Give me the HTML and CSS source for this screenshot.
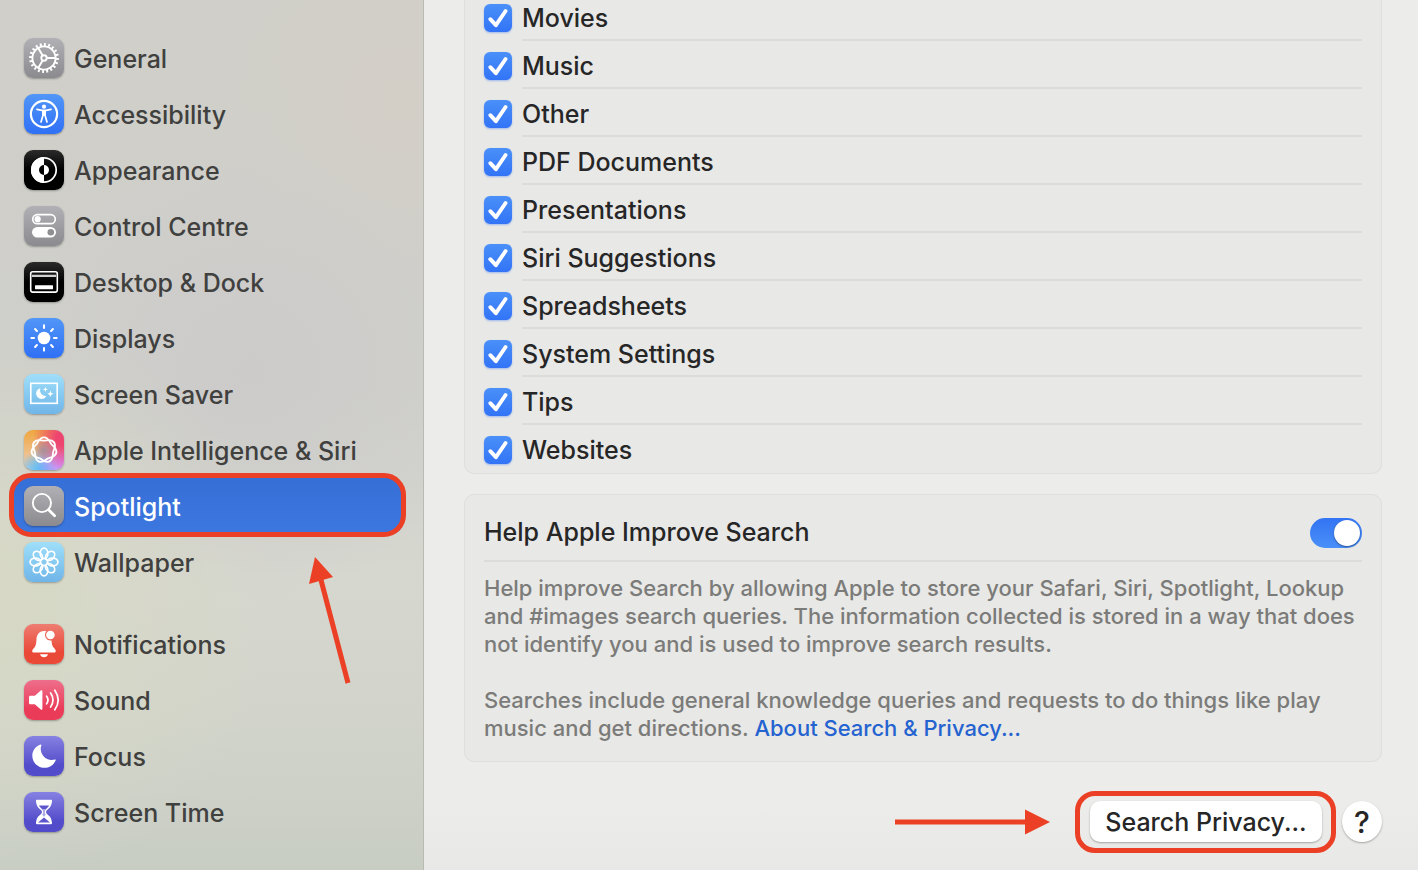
FILE: index.html
```
<!DOCTYPE html>
<html lang="en">

<head>
  <title>System Settings</title>
  <meta charset="utf-8">
  <meta name="viewport" content="width=device-width, initial-scale=1">
  <link rel="stylesheet" href="styles.css">
</head>

<body>

  <!-- Sidebar -->
  <nav class="sidebar">
    <ul class="menu">
      <li><a class="menu-item" href="#">
        <svg class="icon gray" viewBox="0 0 40 40">
          <g fill="none" stroke="#fff" stroke-width="1.9">
            <circle cx="20" cy="20" r="11.6"/>
            <circle cx="20" cy="20" r="13.5" stroke-width="2.8" pathLength="40" stroke-dasharray="0.9 1.1"/>
            <circle cx="20" cy="20" r="2.7"/>
            <path d="M22.8 20H31.5M18.6 17.6L14.2 10M18.6 22.4L14.2 30"/>
          </g>
        </svg>
        <span>General</span></a></li>
      <li><a class="menu-item" href="#">
        <svg class="icon blue" viewBox="0 0 40 40">
          <circle cx="20" cy="20" r="13.1" fill="none" stroke="#fff" stroke-width="2.2"/>
          <circle cx="20" cy="12.7" r="2.1" fill="#fff"/>
          <path d="M13 15.4L18 16.4H22L27 15.4M18.9 16.5V21.500L17 28M21.1 16.5V21.500L23 28" fill="none" stroke="#fff" stroke-width="1.7" stroke-linecap="round" stroke-linejoin="round"/>
          <path d="M18.2 16h3.6v6h-3.6z" fill="#fff"/>
        </svg>
        <span>Accessibility</span></a></li>
      <li><a class="menu-item" href="#">
        <svg class="icon black" viewBox="0 0 40 40">
          <circle cx="20" cy="20" r="12.2" fill="none" stroke="#fff" stroke-width="1.7"/>
          <path d="M20 7a13 13 0 0 0 0 26v-8a5 5 0 0 1 0-10z" fill="#fff"/>
          <path d="M20 15a5 5 0 0 1 0 10z" fill="#fff"/>
        </svg>
        <span>Appearance</span></a></li>
      <li><a class="menu-item" href="#">
        <svg class="icon gray" viewBox="0 0 40 40">
          <rect x="8.7" y="8.7" width="22.6" height="9" rx="4.5" fill="none" stroke="#fff" stroke-width="1.7"/>
          <circle cx="13.6" cy="13.2" r="3.1" fill="#fff"/>
          <rect x="8" y="21" width="24" height="10.6" rx="5.3" fill="#fff"/>
          <circle cx="26.8" cy="26.2" r="3.3" fill="#8f8e93"/>
        </svg>
        <span>Control Centre</span></a></li>
      <li><a class="menu-item" href="#">
        <svg class="icon black" viewBox="0 0 40 40">
          <rect x="6.7" y="9.7" width="26.6" height="20.4" rx="2" fill="none" stroke="#fff" stroke-width="1.6"/>
          <path d="M8 12.8h24v2.2h-24z" fill="#d0d0d0"/>
          <rect x="11" y="23.2" width="18" height="4" rx="0.6" fill="#fff"/>
        </svg>
        <span>Desktop &amp; Dock</span></a></li>
      <li><a class="menu-item" href="#">
        <svg class="icon blue" viewBox="0 0 40 40">
          <circle cx="20" cy="20" r="6.3" fill="#fff"/>
          <path d="M20 7.4v2.6M20 30v2.6M7.4 20H10M30 20h2.6M11.1 11.1l1.8 1.8M27.1 27.1l1.8 1.8M11.1 28.9l1.8-1.8M27.1 12.9l1.8-1.8" stroke="#fff" stroke-width="2.1" stroke-linecap="round"/>
        </svg>
        <span>Displays</span></a></li>
      <li><a class="menu-item" href="#">
        <svg class="icon sky" viewBox="0 0 40 40">
          <rect x="6.8" y="9.3" width="26.4" height="20" fill="none" stroke="#fff" stroke-width="1.6"/>
          <path d="M16.4 14.2A5.4 5.4 0 1 0 22.4 21.8A5.5 5.5 0 0 1 16.400 14.200z" fill="#fff"/>
          <path d="M21.4 12.8l.7 1.9 1.9.7-1.900.7-.7 1.900-.7-1.900-1.900-.7 1.900-.7zM26.400 16.600l.9 2.300 2.300.9-2.300.9-.9 2.300-.9-2.300-2.300-.9 2.300-.9z" fill="#fff"/>
        </svg>
        <span>Screen Saver</span></a></li>
      <li><a class="menu-item" href="#">
        <svg class="icon rainbow" viewBox="0 0 40 40">
          <defs>
            <path id="lobe" d="M-7.35-5.86C-5.48-8.21-4.6-12.6 0-12.6S5.48-8.21 7.35-5.86"/>
          </defs>
          <g transform="translate(20 20)" fill="none" stroke="#fff" stroke-width="1.9">
            <use href="#lobe"/>
            <use href="#lobe" transform="rotate(51.43)"/>
            <use href="#lobe" transform="rotate(102.86)"/>
            <use href="#lobe" transform="rotate(154.29)"/>
            <use href="#lobe" transform="rotate(205.71)"/>
            <use href="#lobe" transform="rotate(257.14)"/>
            <use href="#lobe" transform="rotate(308.57)"/>
          </g>
        </svg>
        <span>Apple Intelligence &amp; Siri</span></a></li>
      <li><a class="menu-item selected" href="#" aria-current="page">
        <svg class="icon gray" viewBox="0 0 40 40">
          <circle cx="17.9" cy="17" r="9.1" fill="none" stroke="#fff" stroke-width="1.9"/>
          <path d="M24.6 23.7l6 6" stroke="#fff" stroke-width="2.8" stroke-linecap="round"/>
        </svg>
        <span>Spotlight</span></a></li>
      <li><a class="menu-item" href="#">
        <svg class="icon sky" viewBox="0 0 40 40">
          <defs>
            <ellipse id="petal" cx="0" cy="-8.600" rx="3.800" ry="5.300"/>
          </defs>
          <g transform="translate(20 20)" fill="none" stroke="#fff" stroke-width="1.700">
            <use href="#petal"/>
            <use href="#petal" transform="rotate(45)"/>
            <use href="#petal" transform="rotate(90)"/>
            <use href="#petal" transform="rotate(135)"/>
            <use href="#petal" transform="rotate(180)"/>
            <use href="#petal" transform="rotate(225)"/>
            <use href="#petal" transform="rotate(270)"/>
            <use href="#petal" transform="rotate(315)"/>
            <circle r="3.600" stroke-width="1.200"/>
          </g>
        </svg>
        <span>Wallpaper</span></a></li>
    </ul>

    <ul class="menu">
      <li><a class="menu-item" href="#">
        <svg class="icon red" viewBox="0 0 40 40">
          <path d="M20 7C15 7 12.8 11 12.5 15C12.2 20 12 22 9.5 24.6C8 26.2 7.6 28.6 9.6 28.6H30.4C32.4 28.6 32 26.2 30.5 24.6C28 22 27.8 20 27.5 16.5A5.6 5.6 0 0 1 22.4 7.3C21.6 7.1 20.8 7 20 7z" fill="#fff"/>
          <circle cx="26.4" cy="11" r="4.3" fill="#fff"/>
          <path d="M16 30.3h8c-.6 2-2 3-4 3s-3.4-1-4-3z" fill="#fff"/>
        </svg>
        <span>Notifications</span></a></li>
      <li><a class="menu-item" href="#">
        <svg class="icon pink" viewBox="0 0 40 40">
          <path d="M6.5 15.8H10.8L16.8 10.5C17.6 9.8 18.4 10.2 18.4 11V29C18.4 29.8 17.6 30.2 16.8 29.5L10.8 24.2H6.5C5.5 24.2 5 23.7 5 22.7V17.3C5 16.3 5.5 15.8 6.5 15.8z" fill="#fff"/>
          <path d="M22.6 16.2Q25.4 20 22.6 23.8M26.6 13Q31.4 20 26.6 27M30.8 10.2Q37.6 20 30.8 29.8" fill="none" stroke="#fff" stroke-width="1.7" stroke-linecap="round"/>
        </svg>
        <span>Sound</span></a></li>
      <li><a class="menu-item" href="#">
        <svg class="icon purple" viewBox="0 0 40 40">
          <path d="M16.6 8.5C17.2 8.3 17.6 8.7 17.3 9.4C14.6 17 21.5 26 30.8 23.6C31.6 23.4 32 23.8 31.6 24.5C29.8 28.9 25.5 31.8 20.6 31.8C13.8 31.8 8.3 26.5 8.3 19.7C8.3 14.5 11.8 10 16.6 8.5z" fill="#fff"/>
        </svg>
        <span>Focus</span></a></li>
      <li><a class="menu-item" href="#">
        <svg class="icon purple" viewBox="0 0 40 40">
          <path d="M13 7.8H27C27.8 7.8 28.2 8.4 28 9.2C27.5 14 26 15.5 23 18C21.7 19.2 21.7 20.8 23 22C26 24.5 27.5 26 28 30.8C28.2 31.6 27.8 32.2 27 32.2H13C12.2 32.2 11.8 31.6 12 30.8C12.5 26 14 24.5 17 22C18.3 20.8 18.3 19.2 17 18C14 15.5 12.5 14 12 9.2C11.8 8.4 12.2 7.8 13 7.8z" fill="#fff"/>
          <path d="M15 13.5H25C24.5 15 23 16.2 21.5 17.4C20.7 18.2 20.7 21.8 21.5 22.8L20 25L18.5 22.8C19.3 21.8 19.3 18.2 18.5 17.4C17 16.2 15.5 15 15 13.5zM14 30.4L20 25.6L26 30.4z" fill="#5c56ce"/>
          <path d="M19.5 17h1v8h-1z" fill="#fff"/>
        </svg>
        <span>Screen Time</span></a></li>
    </ul>

    <svg class="arrow-up" viewBox="0 0 44 128" fill="#eb4025">
      <path d="M7 0L25 20L1 27z"/>
      <path d="M13 23L40 126" fill="none" stroke="#eb4025" stroke-width="5"/>
    </svg>
  </nav>

  <!-- Spotlight settings -->
  <main class="content">
    <ul class="card results">
      <li><input type="checkbox" id="movies" class="check" checked><label for="movies">Movies</label></li>
      <li><input type="checkbox" id="music" class="check" checked><label for="music">Music</label></li>
      <li><input type="checkbox" id="other" class="check" checked><label for="other">Other</label></li>
      <li><input type="checkbox" id="pdf" class="check" checked><label for="pdf">PDF Documents</label></li>
      <li><input type="checkbox" id="presentations" class="check" checked><label for="presentations">Presentations</label></li>
      <li><input type="checkbox" id="siri" class="check" checked><label for="siri">Siri Suggestions</label></li>
      <li><input type="checkbox" id="spreadsheets" class="check" checked><label for="spreadsheets">Spreadsheets</label></li>
      <li><input type="checkbox" id="settings" class="check" checked><label for="settings">System Settings</label></li>
      <li><input type="checkbox" id="tips" class="check" checked><label for="tips">Tips</label></li>
      <li><input type="checkbox" id="websites" class="check" checked><label for="websites">Websites</label></li>
    </ul>

    <section class="card improve">
      <div class="improve-header">
        <label for="improve">Help Apple Improve Search</label>
        <input type="checkbox" role="switch" id="improve" class="switch" checked>
      </div>
      <p>Help improve Search by allowing Apple to store your Safari, Siri, Spotlight, Lookup and #images search queries. The information collected is stored in a way that does not identify you and is used to improve search results.</p>
      <p>Searches include general knowledge queries and requests to do things like play music and get directions. <a href="#">About Search &amp; Privacy...</a></p>
    </section>

    <footer class="actions">
      <svg class="arrow-right" viewBox="0 0 156 26" fill="#eb4025">
        <path d="M0 10.5h132v5H0zM130 0.5L155 13L130 25.5z"/>
      </svg>
      <button type="button" class="privacy-btn">Search Privacy...</button>
      <button type="button" class="help-btn" aria-label="Help">?</button>
    </footer>
  </main>

</body>

</html>
```

FILE: styles.css
```
* {
  box-sizing: border-box;
  margin: 0;
  padding: 0;
}

body {
  display: flex;
  min-height: 100vh;
  font-family: Inter, "Liberation Sans", sans-serif;
  font-size: 25px;
  font-weight: 450;
  line-height: 28px;
  color: #262626;
  background: linear-gradient(#ececea 92%, #e8e8e6);
}

ul {
  list-style: none;
}

a {
  text-decoration: none;
}

/* Sidebar */
.sidebar {
  position: relative;
  flex: none;
  width: 424px;
  padding: 30px 20px 0 12px;
  border-right: 1px solid #b9bab3;
  background:
    radial-gradient(circle at 0 600px, rgba(215, 217, 196, 0.9), rgba(215, 217, 196, 0) 280px),
    radial-gradient(circle at 250px 370px, #cccbca, rgba(204, 203, 202, 0) 230px),
    radial-gradient(circle at 400px 100px, #d3cfc7, rgba(211, 207, 199, 0) 200px),
    linear-gradient(#d0cfc9, #cfcfcb 45%, #d6d7cf 66%, #d2d4cb 82%, #c8cdc4);
}

.menu + .menu {
  margin-top: 26px;
}

.menu-item {
  display: flex;
  align-items: center;
  gap: 10px;
  height: 56px;
  padding: 0 12px;
  color: #40403e;
}

.menu-item span {
  padding-top: 2px;
}

.icon {
  flex: none;
  width: 40px;
  height: 40px;
  border-radius: 9px;
  box-shadow: 0 1px 2px rgba(0, 0, 0, 0.3);
}

.gray {
  background: linear-gradient(#b1b0b5, #8b8a8f);
}

.blue {
  background: linear-gradient(#5196f8, #2f70f5);
}

.black {
  background: linear-gradient(#2b2b2b, #000 50%);
}

.sky {
  background: linear-gradient(#9fdffa, #6fb5e8);
}

.red {
  background: linear-gradient(#ee7d72, #ea4937 70%);
}

.pink {
  background: linear-gradient(#ee6f8b, #ea3b58 75%);
}

.purple {
  background: linear-gradient(#8681e2, #524bca 75%);
}

.rainbow {
  background:
    radial-gradient(circle at 50% 50%, #a88f98, rgba(168, 143, 152, 0) 40%),
    radial-gradient(circle at 100% 20%, #ee4470 15%, rgba(238, 68, 112, 0) 60%),
    radial-gradient(circle at 100% 80%, #d48cf5 10%, rgba(212, 140, 245, 0) 55%),
    radial-gradient(circle at 50% 100%, #5dbdf7 10%, rgba(93, 189, 247, 0) 50%),
    linear-gradient(#f0a63f, #eec08c 60%, #a9cbe4);
}

/* Selected row with the red outline on top */
.menu-item.selected {
  position: relative;
  border-radius: 12px;
  background: linear-gradient(#366fd6, #3c77e0);
  color: #fff;
}

.selected::after {
  content: "";
  position: absolute;
  inset: -5px -3px -3px;
  border: 5px solid #eb4025;
  border-radius: 22px;
}

.arrow-up {
  position: absolute;
  top: 557px;
  left: 308px;
  width: 44px;
  height: 128px;
}

/* Right side */
.content {
  flex: 1;
  min-width: 0;
  padding: 0 36px 16px 40px;
}

.card {
  padding: 0 19px;
  border: 1px solid #dededc;
  border-radius: 10px;
  background: #e8e8e6;
}

.results {
  border-top: 0;
  border-radius: 0 0 10px 10px;
}

.results li {
  display: flex;
  align-items: flex-start;
  gap: 10px;
}

.results label {
  flex: 1;
  padding: 11px 0 7px;
  border-bottom: 2px solid #dcdcda;
}

.results li:first-child label {
  padding-top: 4px;
}

.results li:last-child label {
  border-color: transparent;
}

.check {
  appearance: none;
  width: 28px;
  height: 28px;
  margin-top: 11px;
  border-radius: 6px;
  background: linear-gradient(#4a90f8, #3274f6);
  box-shadow: 0 1px 2px rgba(50, 116, 246, 0.4);
}

.results li:first-child .check {
  margin-top: 4px;
}

.check:checked {
  background-image:
    url("data:image/svg+xml,%3Csvg xmlns='http://www.w3.org/2000/svg' viewBox='0 0 28 28'%3E%3Cpath d='M6.3 15.2L11.9 21.2L21.6 7' fill='none' stroke='white' stroke-width='3.9' stroke-linecap='round' stroke-linejoin='round'/%3E%3C/svg%3E"),
    linear-gradient(#4a90f8, #3274f6);
}

.improve {
  margin-top: 20px;
  padding-bottom: 19px;
}

.improve-header {
  display: flex;
  justify-content: space-between;
  align-items: flex-start;
  padding: 23px 0 12px;
  border-bottom: 2px solid #dcdcda;
}

.switch {
  appearance: none;
  width: 52px;
  height: 30px;
  padding: 2px;
  border-radius: 15px;
  background: linear-gradient(#3274f3, #4a90f8);
}

.switch::before {
  content: "";
  display: block;
  width: 26px;
  height: 26px;
  border-radius: 50%;
  background: #fff;
  box-shadow: 0 1px 2px rgba(0, 0, 0, 0.4);
}

.switch:checked::before {
  margin-left: 22px;
}

.improve p {
  margin-top: 12px;
  font-size: 22px;
  color: #7b7b79;
}

.improve p + p {
  margin-top: 28px;
}

.improve p a {
  color: #2563d0;
}

/* Bottom buttons */
.actions {
  display: flex;
  justify-content: flex-end;
  align-items: center;
  gap: 20px;
  margin-top: 39px;
}

.actions button {
  height: 41px;
  border: 0;
  background: #fff;
  box-shadow: 0 1px 2px rgba(0, 0, 0, 0.3);
  font: inherit;
  color: #262626;
}

.arrow-right {
  width: 156px;
  height: 26px;
  margin-right: 19px;
}

.actions .privacy-btn {
  position: relative;
  width: 232px;
  border-radius: 10px;
}

.privacy-btn::after {
  content: "";
  position: absolute;
  inset: -10px -14px -11px -15px;
  border: 5px solid #eb4025;
  border-radius: 20px;
}

.actions .help-btn {
  width: 40px;
  border-radius: 50%;
  font-size: 30px;
  font-weight: 500;
}
```
